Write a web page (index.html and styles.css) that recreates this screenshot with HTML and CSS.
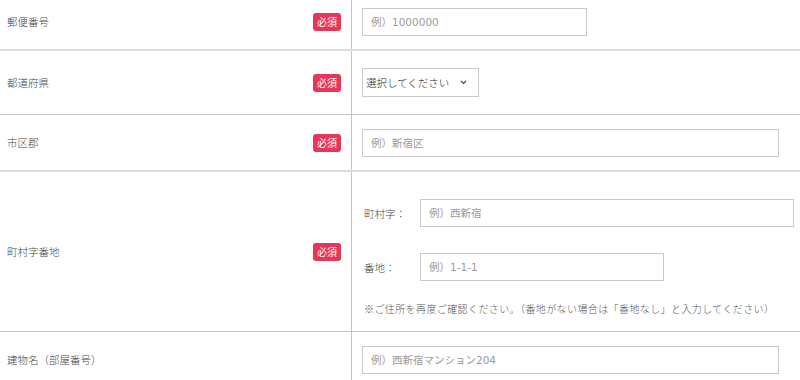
FILE: index.html
```html
<!DOCTYPE html>
<html lang="ja">
<head>
<meta charset="utf-8">
<link rel="stylesheet" href="styles.css">
</head>
<body>
<div class="form">
  <div class="row row-a">
    <div class="label"><span>郵便番号</span><span class="req">必須</span></div>
    <div class="field"><input class="inp w-zip" type="text" placeholder="例）1000000"></div>
  </div>
  <div class="row row-b">
    <div class="label"><span>都道府県</span><span class="req">必須</span></div>
    <div class="field field-sel">
      <div class="select"><span>選択してください</span><svg class="chev" width="7" height="5" viewBox="0 0 7 5"><path d="M1 1 L3.5 3.5 L6 1" fill="none" stroke="#444" stroke-width="1.2"/></svg></div>
    </div>
  </div>
  <div class="row row-a">
    <div class="label"><span>市区郡</span><span class="req">必須</span></div>
    <div class="field"><input class="inp w-full" type="text" placeholder="例）新宿区"></div>
  </div>
  <div class="row row-b">
    <div class="label"><span>町村字番地</span><span class="req">必須</span></div>
    <div class="field field-multi">
      <div class="sub"><span class="sublabel">町村字：</span><input class="inp w-town" type="text" placeholder="例）西新宿"></div>
      <div class="sub sub2"><span class="sublabel">番地：</span><input class="inp w-num" type="text" placeholder="例）1-1-1"></div>
      <p class="note">※ご住所を再度ご確認ください。（番地がない場合は「番地なし」と入力してください）</p>
    </div>
  </div>
  <div class="row row-last">
    <div class="label"><span>建物名（部屋番号）</span></div>
    <div class="field"><input class="inp w-full" type="text" placeholder="例）西新宿マンション204"></div>
  </div>
</div>
</body>
</html>
```

FILE: styles.css
```css
html, body {
  margin: 0;
  padding: 0;
  background: #fff;
}
body {
  font-family: "Noto Sans CJK JP", "Noto Sans", sans-serif;
  color: #333;
  font-size: 10px;
  overflow: hidden;
}
.form {
  margin-top: -6px;
  width: 800px;
}
.row {
  display: grid;
  grid-template-columns: 352px 1fr;
}
.row-a {
  border-bottom: 2px solid #dcdcdc;
}
.row-b {
  border-bottom: 1px solid #c4c4c4;
}
.label {
  display: flex;
  align-items: center;
  justify-content: space-between;
  padding: 0 10px 0 7px;
  border-right: 1px solid #c4c4c4;
  font-size: 10.5px;
  font-weight: 300;
  color: #444;
}
.req {
  display: inline-block;
  background: #e8365a;
  color: #fff;
  font-size: 10px;
  font-weight: 400;
  line-height: 18px;
  height: 18px;
  width: 28px;
  text-align: center;
  border-radius: 3px;
  margin-top: 1px;
}
.field {
  padding: 14px 20px 13px 10px;
}
.field-sel {
  padding: 17px 20px 17px 10px;
}
.field-multi {
  padding: 27px 5px 14px 10px;
}
.inp {
  display: block;
  box-sizing: border-box;
  height: 28px;
  border: 1px solid #c8c8c8;
  padding: 0 8px;
  font-family: "DejaVu Sans", "Noto Sans CJK JP", sans-serif;
  font-size: 10.5px;
  color: #333;
  background: #fff;
  outline: none;
  margin: 0;
}
.inp::placeholder {
  color: #9a9a9a;
}
.w-zip { width: 225px; }
.w-full { width: 417px; }
.w-town { width: 374px; }
.w-num { width: 244px; }
.select {
  box-sizing: border-box;
  width: 117px;
  height: 29px;
  border: 1px solid #c8c8c8;
  display: flex;
  align-items: center;
  justify-content: space-between;
  padding: 0 11px 0 3px;
  font-size: 10.5px;
  font-weight: 300;
  color: #222;
}
.chev {
  display: block;
}
.sub {
  display: flex;
  align-items: center;
}
.sub2 {
  margin-top: 26px;
}
.sublabel {
  width: 58px;
  padding-left: 2px;
  box-sizing: border-box;
  font-size: 10.5px;
  font-weight: 300;
  color: #444;
}
.note {
  margin: 20px 0 0 2px;
  font-size: 10px;
  font-weight: 300;
  letter-spacing: 0.4px;
  line-height: 16px;
  color: #555;
}
```
